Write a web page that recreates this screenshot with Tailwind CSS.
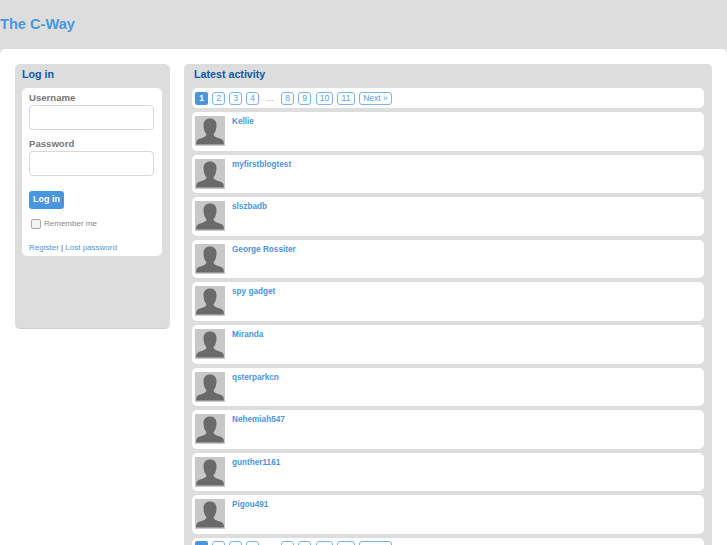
<!DOCTYPE html>
<html><head><meta charset="utf-8"><script src="https://cdn.jsdelivr.net/npm/@tailwindcss/browser@4"></script></head>
<body class="h-[545px] overflow-hidden bg-[#dddddd] font-['Liberation_Sans',sans-serif]">
<header class="h-[49px] flex items-center"><h1 class="text-[14.600px] font-bold text-[#4a96dc]">The C-Way</h1></header>
<div class="h-[496px] overflow-hidden bg-white rounded-t-[5px] flex items-start gap-[14px] pl-[15px] pr-[15px] pt-[15px]">
<aside class="w-[155px] h-[265px] shrink-0 bg-[#dddddd] rounded-[5px] border-b border-[#d0d0d0] pl-[7px] pr-[8px]">
<h2 class="text-[10.700px] leading-[20px] font-bold text-[#0e5aa8]">Log in</h2>
<div class="mt-[4px] bg-white rounded-[5px] h-[168px] pl-[7px] pr-[8px] pt-[4px]">
<label class="block text-[9.600px] leading-[12px] font-bold text-[#777]">Username</label>
<div class="mt-[1px] h-[25px] rounded-[4px] border border-[#d8d8de] bg-white"></div>
<label class="block mt-[8px] text-[9.600px] leading-[12px] font-bold text-[#777]">Password</label>
<div class="mt-[1px] h-[25px] rounded-[4px] border border-[#d8d8de] bg-white"></div>
<button class="block mt-[14.500px] h-[18px] w-[35px] rounded-[3px] bg-[#4a96dc] text-white text-[9px] font-bold">Log in</button>
<div class="mt-[9.500px] flex items-center gap-[3px] pl-[2px]"><span class="w-[10px] h-[10px] rounded-[2px] border border-[#aaa] bg-[#f4f4f4]"></span><span class="mt-[1px] text-[8px] leading-[10px] text-[#888]">Remember me</span></div>
<p class="mt-[14px] text-[8px] leading-[10px] text-[#555]"><a class="text-[#4a96dc]">Register</a> | <a class="text-[#4a96dc]">Lost password</a></p>
</div></aside>
<main class="flex-1 bg-[#dddddd] rounded-[5px] px-[8px] h-[600px]">
<h2 class="text-[10.700px] leading-[20px] font-bold text-[#0e5aa8] pl-[2px]">Latest activity</h2>
<div class="mt-[4px] flex flex-col gap-[4px]">
<div class="h-[20px] bg-white rounded-[5px] flex items-center pl-[3px] text-[8.500px] text-[#5a9fe0] gap-[4px]">
<span class="w-[13px] h-[13px] rounded-[2px] bg-[#4a96dc] text-white font-bold flex items-center justify-center">1</span>
<span class="w-[13px] h-[13px] rounded-[3px] border border-[#7fb3e6] flex items-center justify-center">2</span>
<span class="w-[13px] h-[13px] rounded-[3px] border border-[#7fb3e6] flex items-center justify-center">3</span>
<span class="w-[13px] h-[13px] rounded-[3px] border border-[#7fb3e6] flex items-center justify-center">4</span>
<span class="w-[14px] text-center text-[#aaa]">...</span>
<span class="w-[13px] h-[13px] rounded-[3px] border border-[#7fb3e6] flex items-center justify-center">8</span>
<span class="w-[13px] h-[13px] rounded-[3px] border border-[#7fb3e6] flex items-center justify-center">9</span>
<span class="ml-[1px] w-[17px] h-[13px] rounded-[3px] border border-[#7fb3e6] flex items-center justify-center">10</span>
<span class="w-[18px] h-[13px] rounded-[3px] border border-[#7fb3e6] flex items-center justify-center">11</span>
<span class="w-[33px] h-[13px] rounded-[3px] border border-[#7fb3e6] flex items-center justify-center">Next »</span>
</div>
<div class="h-[38.600px] bg-white rounded-[5px] flex items-start pl-[3px] pt-[4px] gap-[7px]"><svg class="w-[30px] h-[30px] shrink-0" viewBox="0 0 30 30"><rect width="30" height="30" fill="#c8c8c8"/><path d="M1 28.500C1 25 2 23.500 5 22.500c3-1 6-1.500 6.500-4C9.500 16 8.500 13 8.500 9 8.500 5 11 2.500 15 2.500S21.500 5 21.500 9c0 4-1 7-3 9.500.5 2.500 3.500 3 6.500 4 3 1 4 2.500 4 6z" fill="#6a6a6a"/></svg><span class="mt-[1px] text-[8.200px] leading-[10px] font-bold text-[#4a96dc]">Kellie</span></div>
<div class="h-[38.600px] bg-white rounded-[5px] flex items-start pl-[3px] pt-[4px] gap-[7px]"><svg class="w-[30px] h-[30px] shrink-0" viewBox="0 0 30 30"><rect width="30" height="30" fill="#c8c8c8"/><path d="M1 28.500C1 25 2 23.500 5 22.500c3-1 6-1.500 6.500-4C9.500 16 8.500 13 8.500 9 8.500 5 11 2.500 15 2.500S21.500 5 21.500 9c0 4-1 7-3 9.500.5 2.500 3.500 3 6.500 4 3 1 4 2.500 4 6z" fill="#6a6a6a"/></svg><span class="mt-[1px] text-[8.200px] leading-[10px] font-bold text-[#4a96dc]">myfirstblogtest</span></div>
<div class="h-[38.600px] bg-white rounded-[5px] flex items-start pl-[3px] pt-[4px] gap-[7px]"><svg class="w-[30px] h-[30px] shrink-0" viewBox="0 0 30 30"><rect width="30" height="30" fill="#c8c8c8"/><path d="M1 28.500C1 25 2 23.500 5 22.500c3-1 6-1.500 6.500-4C9.500 16 8.500 13 8.500 9 8.500 5 11 2.500 15 2.500S21.500 5 21.500 9c0 4-1 7-3 9.500.5 2.500 3.500 3 6.500 4 3 1 4 2.500 4 6z" fill="#6a6a6a"/></svg><span class="mt-[1px] text-[8.200px] leading-[10px] font-bold text-[#4a96dc]">slszbadb</span></div>
<div class="h-[38.600px] bg-white rounded-[5px] flex items-start pl-[3px] pt-[4px] gap-[7px]"><svg class="w-[30px] h-[30px] shrink-0" viewBox="0 0 30 30"><rect width="30" height="30" fill="#c8c8c8"/><path d="M1 28.500C1 25 2 23.500 5 22.500c3-1 6-1.500 6.500-4C9.500 16 8.500 13 8.500 9 8.500 5 11 2.500 15 2.500S21.500 5 21.500 9c0 4-1 7-3 9.500.5 2.500 3.500 3 6.500 4 3 1 4 2.500 4 6z" fill="#6a6a6a"/></svg><span class="mt-[1px] text-[8.200px] leading-[10px] font-bold text-[#4a96dc]">George Rossiter</span></div>
<div class="h-[38.600px] bg-white rounded-[5px] flex items-start pl-[3px] pt-[4px] gap-[7px]"><svg class="w-[30px] h-[30px] shrink-0" viewBox="0 0 30 30"><rect width="30" height="30" fill="#c8c8c8"/><path d="M1 28.500C1 25 2 23.500 5 22.500c3-1 6-1.500 6.500-4C9.500 16 8.500 13 8.500 9 8.500 5 11 2.500 15 2.500S21.500 5 21.500 9c0 4-1 7-3 9.500.5 2.500 3.500 3 6.500 4 3 1 4 2.500 4 6z" fill="#6a6a6a"/></svg><span class="mt-[1px] text-[8.200px] leading-[10px] font-bold text-[#4a96dc]">spy gadget</span></div>
<div class="h-[38.600px] bg-white rounded-[5px] flex items-start pl-[3px] pt-[4px] gap-[7px]"><svg class="w-[30px] h-[30px] shrink-0" viewBox="0 0 30 30"><rect width="30" height="30" fill="#c8c8c8"/><path d="M1 28.500C1 25 2 23.500 5 22.500c3-1 6-1.500 6.500-4C9.500 16 8.500 13 8.500 9 8.500 5 11 2.500 15 2.500S21.500 5 21.500 9c0 4-1 7-3 9.500.5 2.500 3.500 3 6.500 4 3 1 4 2.500 4 6z" fill="#6a6a6a"/></svg><span class="mt-[1px] text-[8.200px] leading-[10px] font-bold text-[#4a96dc]">Miranda</span></div>
<div class="h-[38.600px] bg-white rounded-[5px] flex items-start pl-[3px] pt-[4px] gap-[7px]"><svg class="w-[30px] h-[30px] shrink-0" viewBox="0 0 30 30"><rect width="30" height="30" fill="#c8c8c8"/><path d="M1 28.500C1 25 2 23.500 5 22.500c3-1 6-1.500 6.500-4C9.500 16 8.500 13 8.500 9 8.500 5 11 2.500 15 2.500S21.500 5 21.500 9c0 4-1 7-3 9.500.5 2.500 3.500 3 6.500 4 3 1 4 2.500 4 6z" fill="#6a6a6a"/></svg><span class="mt-[1px] text-[8.200px] leading-[10px] font-bold text-[#4a96dc]">qsterparkcn</span></div>
<div class="h-[38.600px] bg-white rounded-[5px] flex items-start pl-[3px] pt-[4px] gap-[7px]"><svg class="w-[30px] h-[30px] shrink-0" viewBox="0 0 30 30"><rect width="30" height="30" fill="#c8c8c8"/><path d="M1 28.500C1 25 2 23.500 5 22.500c3-1 6-1.500 6.500-4C9.500 16 8.500 13 8.500 9 8.500 5 11 2.500 15 2.500S21.500 5 21.500 9c0 4-1 7-3 9.500.5 2.500 3.500 3 6.500 4 3 1 4 2.500 4 6z" fill="#6a6a6a"/></svg><span class="mt-[1px] text-[8.200px] leading-[10px] font-bold text-[#4a96dc]">Nehemiah547</span></div>
<div class="h-[38.600px] bg-white rounded-[5px] flex items-start pl-[3px] pt-[4px] gap-[7px]"><svg class="w-[30px] h-[30px] shrink-0" viewBox="0 0 30 30"><rect width="30" height="30" fill="#c8c8c8"/><path d="M1 28.500C1 25 2 23.500 5 22.500c3-1 6-1.500 6.500-4C9.500 16 8.500 13 8.500 9 8.500 5 11 2.500 15 2.500S21.500 5 21.500 9c0 4-1 7-3 9.500.5 2.500 3.500 3 6.500 4 3 1 4 2.500 4 6z" fill="#6a6a6a"/></svg><span class="mt-[1px] text-[8.200px] leading-[10px] font-bold text-[#4a96dc]">gunther1161</span></div>
<div class="h-[38.600px] bg-white rounded-[5px] flex items-start pl-[3px] pt-[4px] gap-[7px]"><svg class="w-[30px] h-[30px] shrink-0" viewBox="0 0 30 30"><rect width="30" height="30" fill="#c8c8c8"/><path d="M1 28.500C1 25 2 23.500 5 22.500c3-1 6-1.500 6.500-4C9.500 16 8.500 13 8.500 9 8.500 5 11 2.500 15 2.500S21.500 5 21.500 9c0 4-1 7-3 9.500.5 2.500 3.500 3 6.500 4 3 1 4 2.500 4 6z" fill="#6a6a6a"/></svg><span class="mt-[1px] text-[8.200px] leading-[10px] font-bold text-[#4a96dc]">Pigou491</span></div>
<div class="h-[20px] bg-white rounded-[5px] flex items-center pl-[3px] text-[8.500px] text-[#5a9fe0] gap-[4px]">
<span class="w-[13px] h-[13px] rounded-[2px] bg-[#4a96dc] text-white font-bold flex items-center justify-center">1</span>
<span class="w-[13px] h-[13px] rounded-[3px] border border-[#7fb3e6] flex items-center justify-center">2</span>
<span class="w-[13px] h-[13px] rounded-[3px] border border-[#7fb3e6] flex items-center justify-center">3</span>
<span class="w-[13px] h-[13px] rounded-[3px] border border-[#7fb3e6] flex items-center justify-center">4</span>
<span class="w-[14px] text-center text-[#aaa]">...</span>
<span class="w-[13px] h-[13px] rounded-[3px] border border-[#7fb3e6] flex items-center justify-center">8</span>
<span class="w-[13px] h-[13px] rounded-[3px] border border-[#7fb3e6] flex items-center justify-center">9</span>
<span class="ml-[1px] w-[17px] h-[13px] rounded-[3px] border border-[#7fb3e6] flex items-center justify-center">10</span>
<span class="w-[18px] h-[13px] rounded-[3px] border border-[#7fb3e6] flex items-center justify-center">11</span>
<span class="w-[33px] h-[13px] rounded-[3px] border border-[#7fb3e6] flex items-center justify-center">Next »</span>
</div>
</div>
</main>
</div>
</body></html>
